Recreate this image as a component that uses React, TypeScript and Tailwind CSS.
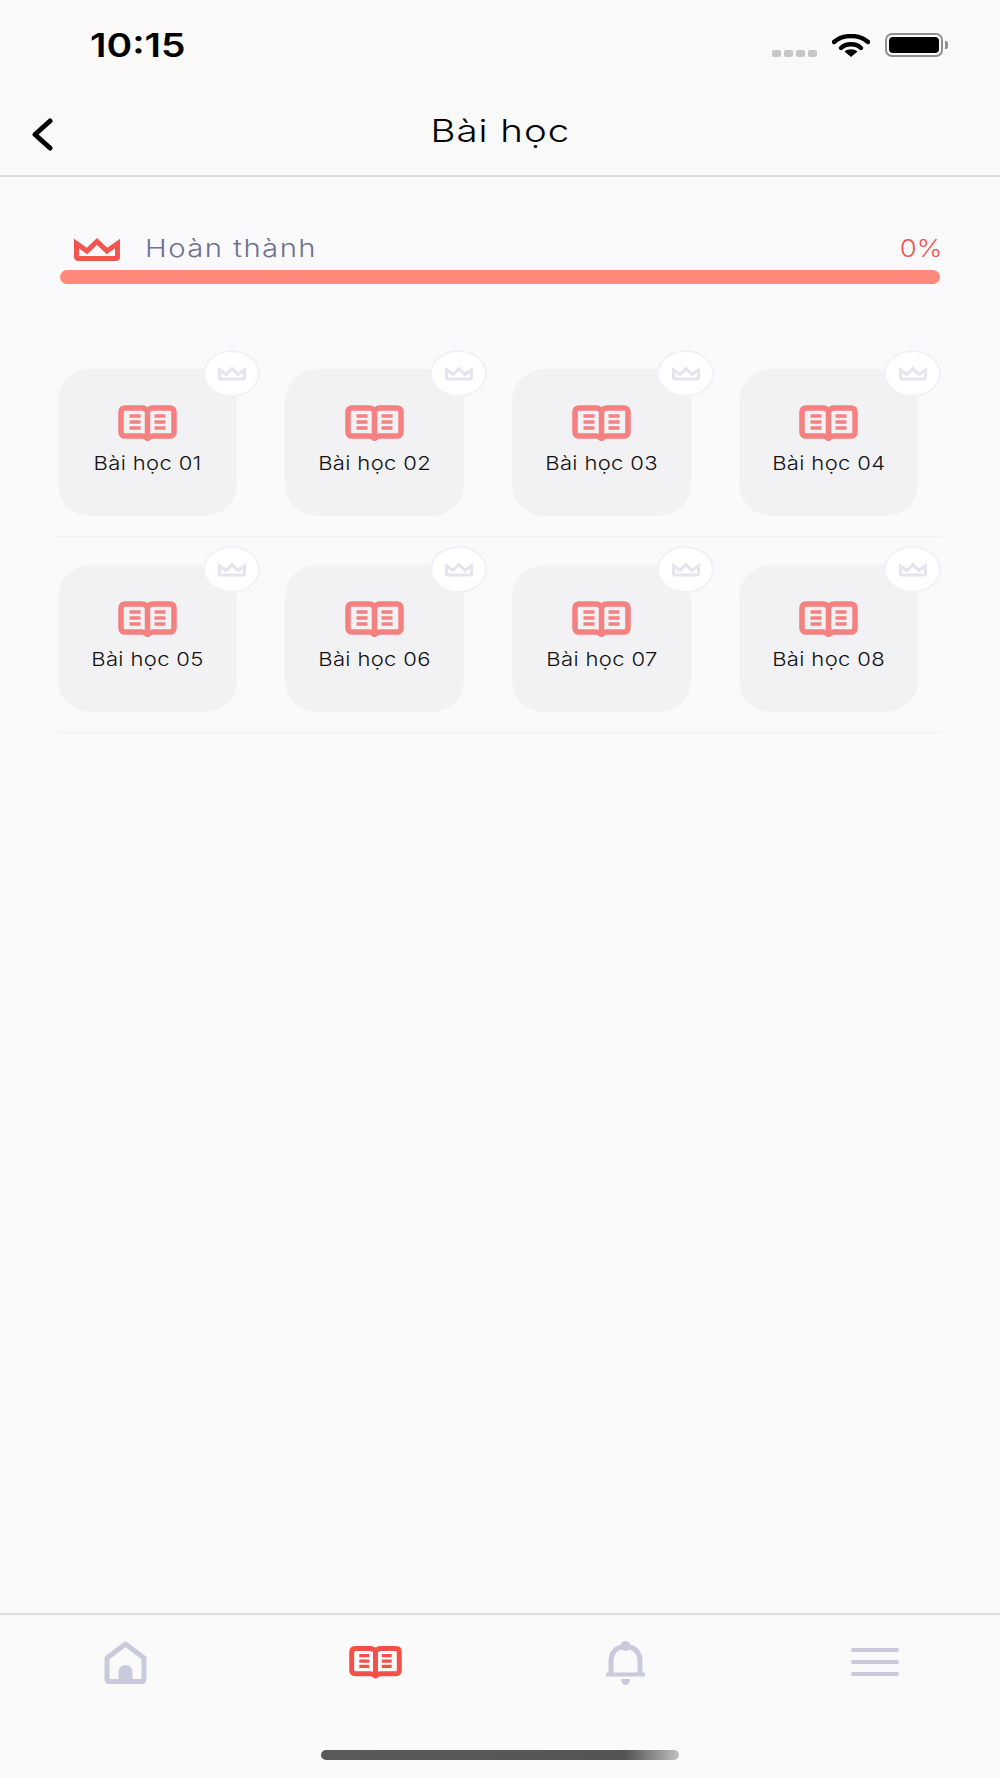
import React from "react";

const lessons = ["01", "02", "03", "04", "05", "06", "07", "08"];
const rows = [lessons.slice(0, 4), lessons.slice(4, 8)];

function BookIcon({ className }: { className?: string }) {
  return (
    <svg viewBox="0 0 59 36" fill="none" className={className}>
      <path
        d="M29.5 6C28 4 26 3 24 3H7C4.5 3 3 4.5 3 7V27C3 29.5 4.5 31 7 31H24C26 31 28 32 29.5 33.5C31 32 33 31 35 31H52C54.5 31 56 29.5 56 27V7C56 4.5 54.5 3 52 3H35C33 3 31 4 29.5 6V33.5"
        stroke="currentColor"
        strokeWidth="5.5"
        strokeLinejoin="round"
        strokeLinecap="round"
      />
      <path
        d="M11.5 11H22.5M11.5 17H22.5M11.5 23H22.5M36.5 11H47.5M36.5 17H47.5M36.5 23H47.5"
        stroke="currentColor"
        strokeWidth="3.6"
      />
    </svg>
  );
}

function CrownIcon({ className }: { className?: string }) {
  return (
    <svg viewBox="0 0 46 23" fill="none" className={className}>
      <path
        d="M2.5 5.5L13 13L23 3.5L33 13L43.5 5.5V19C43.5 20 42.8 20.5 42 20.5H4C3.2 20.5 2.5 20 2.5 19V5.5Z"
        stroke="currentColor"
        strokeWidth="5"
        strokeLinejoin="miter"
      />
    </svg>
  );
}

function LessonCard({ num }: { num: string }) {
  return (
    <div className="relative w-[179px] h-[147px] rounded-[32px] bg-[#f2f2f5] flex flex-col items-center pt-[36px]">
      <div className="absolute top-[-19px] right-[-23px] w-[57px] h-[47px] rounded-[50%] bg-white border-2 border-[#f2f2f6] flex items-center justify-center">
        <CrownIcon className="w-[28px] h-[15px] text-[#e4e5ed]" />
      </div>
      <BookIcon className="w-[59px] h-[36px] text-[#f58080]" />
      <span className="inline-block mt-[9px] text-[19px] leading-[28px] font-light tracking-[0.3px] text-[#111] whitespace-nowrap scale-x-[1.16]">
        Bài học {num}
      </span>
    </div>
  );
}

export default function App() {
  return (
    <div className="w-[1000px] h-[1778px] flex flex-col bg-[#fafafd] font-[Inter,sans-serif]">
      <header className="h-[177px] shrink-0 bg-gradient-to-b from-[#fbfaf8] to-[#f9f9f9] border-b-2 border-[#dedede]">
        <div className="h-[90px] flex items-start justify-between pl-[90px] pr-[52px] pt-[25px]">
          <span className="inline-block origin-left scale-x-[1.18] text-[33px] leading-[40px] font-semibold text-black">10:15</span>
          <div className="flex items-center pt-[8px]">
            <div className="flex gap-[3px] mt-[16px]">
              <span className="w-[9px] h-[7px] rounded-[2px] bg-[#c6c6c6]" />
              <span className="w-[9px] h-[7px] rounded-[2px] bg-[#c6c6c6]" />
              <span className="w-[9px] h-[7px] rounded-[2px] bg-[#c6c6c6]" />
              <span className="w-[9px] h-[7px] rounded-[2px] bg-[#c6c6c6]" />
            </div>
            <svg viewBox="0 0 38 23" className="w-[38px] h-[23px] ml-[15px]" fill="none">
              <path d="M2 8C11 0 27 0 36 8" stroke="black" strokeWidth="4.4" strokeLinecap="round" />
              <path d="M9 14C14 9 24 9 29 14" stroke="black" strokeWidth="4.4" strokeLinecap="round" />
              <path d="M12.5 17.5C16 14.5 22 14.5 25.5 17.5L19 23Z" fill="black" />
            </svg>
            <div className="ml-[15px] w-[58px] h-[24px] rounded-[7px] border-2 border-[#8f8f8f] p-[2px]">
              <div className="w-full h-full rounded-[4px] bg-black" />
            </div>
            <span className="ml-[2px] w-[3px] h-[8px] rounded-r-[2px] bg-[#8f8f8f]" />
          </div>
        </div>
        <div className="relative h-[85px] flex items-start justify-center pt-[21px]">
          <svg viewBox="0 0 22 33" className="absolute left-[31px] top-[28px] w-[22px] h-[33px]" fill="none">
            <path d="M19 3L4 16.5L19 30" stroke="black" strokeWidth="5" strokeLinecap="round" strokeLinejoin="round" />
          </svg>
          <h1 className="scale-x-[1.24] text-[31px] leading-[40px] font-light tracking-[0.8px] text-black">Bài học</h1>
        </div>
      </header>

      <main className="flex-1">
        <section className="ml-[60px] w-[880px] mt-[58px]">
          <div className="flex items-center pl-[14px] h-[35px] pb-[7px]">
            <CrownIcon className="w-[46px] h-[23px] text-[#f25450]" />
            <span className="inline-block origin-left scale-x-[1.22] ml-[25px] text-[24px] font-light tracking-[1.2px] text-[#6f7290]">Hoàn thành</span>
            <span className="inline-block origin-right scale-x-[1.14] ml-auto mr-[-2px] text-[24px] font-light text-[#f2544f]">0%</span>
          </div>
          <div className="h-[14px] rounded-[7px] bg-[#ff8a7c]" />
        </section>

        <section className="ml-[58px] w-[883px] mt-[85px]">
          {rows.map((row, i) => (
            <div key={i} className="flex gap-[48px] pb-[20px] mb-[28px] border-b border-[#f0f0f3]">
              {row.map(num => (
                <LessonCard key={num} num={num} />
              ))}
            </div>
          ))}
        </section>
      </main>

      <nav className="h-[165px] shrink-0 bg-[#fafafa] border-t-2 border-[#dedede]">
        <div className="grid grid-cols-4 h-[135px] pt-[26px]">
          <div className="flex justify-center">
            <svg viewBox="0 0 43 43" className="w-[43px] h-[43px]" fill="none">
              <path
                d="M21.5 3L40 17V38C40 39.5 39 40.5 37.5 40.5H5.5C4 40.5 3 39.5 3 38V17L21.5 3Z"
                stroke="#c9cadc"
                strokeWidth="5"
                strokeLinejoin="round"
              />
              <path d="M14.5 40V31C14.5 27 17.5 24 21.5 24C25.5 24 28.5 27 28.5 31V40Z" fill="#c9cadc" />
            </svg>
          </div>
          <div className="flex justify-center pt-[4px]">
            <BookIcon className="w-[53px] h-[34px] text-[#f44f4b]" />
          </div>
          <div className="flex justify-center">
            <svg viewBox="0 0 39 44" className="w-[39px] h-[44px]" fill="none">
              <circle cx="19.5" cy="5" r="5" fill="#c9cadc" />
              <path d="M5 33V20C5 11 11 5.5 19.5 5.5C28 5.5 34 11 34 20V33" stroke="#c9cadc" strokeWidth="5" />
              <path d="M0 31.5H39V35.5H0Z" fill="#c9cadc" />
              <path d="M15 38H24C24 41 22 44 19.5 44C17 44 15 41 15 38Z" fill="#c9cadc" />
            </svg>
          </div>
          <div className="flex justify-center pt-[7px]">
            <div className="w-[48px] h-[28px] flex flex-col justify-between">
              <span className="h-[4px] rounded-full bg-[#c9cadc]" />
              <span className="h-[4px] rounded-full bg-[#c9cadc]" />
              <span className="h-[4px] rounded-full bg-[#c9cadc]" />
            </div>
          </div>
        </div>
        <div className="w-[358px] h-[10px] mx-auto rounded-full bg-gradient-to-r from-[#5a5a5a] via-[#555] via-85% to-[#c0c0c0]" />
      </nav>
    </div>
  );
}
